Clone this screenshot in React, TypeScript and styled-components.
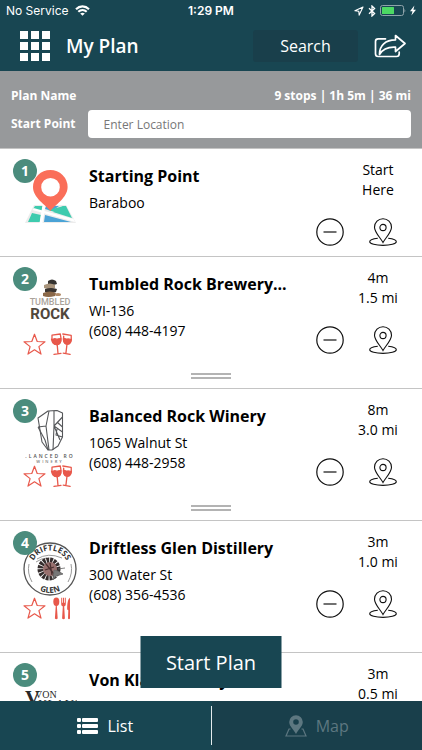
import React from "react";
import styled, { createGlobalStyle } from "styled-components";

const color = {
  teal: "#184652",
  tealDark: "#193f4b",
  green: "#4b8c7d",
  red: "#e8584b",
  grey: "#97999b",
  line: "#c4c4c4",
};

const GlobalStyle = createGlobalStyle`
  *, *::before, *::after { box-sizing: border-box; }
  body { margin: 0; background: #fff; color: #000; font-family: "Open Sans", "Noto Sans", sans-serif; }
  button, input { font: inherit; color: inherit; }
  button { border: 0; padding: 0; background: none; cursor: pointer; }
  svg { display: block; }
`;

const Screen = styled.div`
  display: flex;
  flex-direction: column;
  height: 100vh;
  overflow: hidden;
`;

const StatusBar = styled.div`
  display: grid;
  grid-template-columns: 1fr auto 1fr;
  align-items: center;
  height: 21px;
  padding: 0 6px;
  background: ${color.teal};
  color: #fff;
  font-family: Inter, "Liberation Sans", sans-serif;
  font-size: 12px;
  line-height: 20px;
`;

const StatusGroup = styled.div<{ $end?: boolean }>`
  display: flex;
  align-items: center;
  gap: ${(p) => (p.$end ? 4 : 6)}px;
  justify-content: ${(p) => (p.$end ? "flex-end" : "flex-start")};
`;

const Clock = styled.time`
  font-weight: 600;
`;

const TopBar = styled.header`
  display: flex;
  align-items: center;
  height: 50px;
  padding: 0 16px 0 20px;
  background: ${color.teal};
  color: #fff;
`;

const IconButton = styled.button`
  flex: none;
  display: block;
`;

const PageTitle = styled.h1`
  flex: 1;
  margin: 0 0 0 16px;
  font-size: 19px;
  font-weight: 600;
  line-height: 24px;
`;

const SearchButton = styled.button`
  width: 105px;
  height: 32px;
  margin-right: 16px;
  border-radius: 3px;
  background: ${color.tealDark};
  font-size: 16px;
`;

const PlanPanel = styled.section`
  display: flex;
  flex-direction: column;
  gap: 4px;
  padding: 15px 11px 10px;
  background: ${color.grey};
  color: #fff;
  font-size: 12px;
  font-weight: 700;
  line-height: 20px;
`;

const PlanRow = styled.div`
  display: flex;
  align-items: center;
  justify-content: space-between;
  gap: 12px;
`;

const LocationInput = styled.input`
  flex: 1;
  min-width: 0;
  height: 28px;
  padding: 0 16px;
  border: 0;
  border-radius: 4px;
  background: #fff;
  color: #222;
  font-size: 12px;
  font-weight: 400;
  &::placeholder { color: #777; opacity: 1; }
`;

const ListArea = styled.main`
  position: relative;
  flex: 1;
  min-height: 0;
  display: flex;
  flex-direction: column;
`;

const StopList = styled.ol`
  flex: 1;
  min-height: 0;
  overflow: hidden;
  margin: 0;
  padding: 0;
  list-style: none;
`;

const StopItem = styled.li`
  border-top: 1px solid ${color.line};
`;

const StopBody = styled.div`
  display: grid;
  grid-template-columns: 66px 1fr 106px;
  height: 107px;
  padding-left: 23px;
`;

const Thumb = styled.div`
  position: relative;
  padding-top: 21px;
`;

const LogoFrame = styled.div`
  height: 54px;
`;

const Badge = styled.span`
  position: absolute;
  top: 10px;
  left: -10px;
  width: 24px;
  height: 24px;
  border-radius: 50%;
  background: ${color.green};
  color: #fff;
  font-size: 14px;
  font-weight: 700;
  line-height: 24px;
  text-align: center;
`;

const Tags = styled.div`
  display: flex;
  gap: 4px;
  padding-top: 1px;
`;

const Details = styled.div`
  min-width: 0;
  padding-top: 16px;
  font-size: 14px;
  line-height: 20px;
`;

const StopName = styled.h2`
  margin: 0 0 6px;
  font-size: 16px;
  font-weight: 700;
  line-height: 22px;
  white-space: nowrap;
`;

const Line = styled.div``;

const Aside = styled.div`
  display: flex;
  flex-direction: column;
  align-items: flex-end;
  font-size: 14px;
  line-height: 20px;
`;

const Travel = styled.div`
  width: 88px;
  padding-top: 11px;
  text-align: center;
`;

const Actions = styled.div`
  display: flex;
  gap: 25px;
  padding: 18px 25px 0 0;
`;

const DragHandle = styled.button`
  display: block;
  width: 40px;
  height: 24px;
  margin: 0 auto;
  &::before {
    content: "";
    display: block;
    height: 6px;
    border: solid #b3b3b3;
    border-width: 2px 0;
  }
`;

const StartButton = styled.button`
  position: absolute;
  left: 50%;
  bottom: 13px;
  width: 141px;
  height: 52px;
  transform: translateX(-50%);
  background: ${color.teal};
  color: #fff;
  font-size: 20px;
`;

const TabBar = styled.nav`
  display: flex;
  height: 49px;
  background: ${color.teal};
  color: #fff;
`;

const Tab = styled.button<{ $muted?: boolean }>`
  flex: 1;
  display: flex;
  align-items: center;
  justify-content: center;
  gap: 9px;
  background: ${(p) => (p.$muted ? color.tealDark : color.teal)};
  color: ${(p) => (p.$muted ? "#5d7780" : "#fff")};
  font-size: 16px;
`;

const TabDivider = styled.span`
  width: 1px;
  margin: 5px 0;
  background: #e4ebed;
`;

const WifiIcon = () => (
  <svg width="15" height="11" viewBox="0 0 15 11" fill="none" stroke="#fff" strokeWidth="2.1">
    <path d="M1 4.2C4.7.4 10.3.4 14 4.2M3.3 6.8c2.5-2.4 5.9-2.4 8.4 0" />
    <path d="M7.5 10.8 5.2 8.6q2.3-1.7 4.6 0z" fill="#fff" stroke="none" />
  </svg>
);

const LocationArrow = () => (
  <svg width="10" height="10" viewBox="0 0 10 10" fill="none" stroke="#fff" strokeWidth="1.1">
    <path d="M9 1 .9 4.8l3.9.4.4 3.9z" strokeLinejoin="round" />
  </svg>
);

const BluetoothIcon = () => (
  <svg width="8" height="12" viewBox="0 0 8 12" fill="none" stroke="#fff" strokeWidth="1.3">
    <path d="M1 3.3 6.6 8.5 4 11V1l2.6 2.5L1 8.7" />
  </svg>
);

const BatteryIcon = () => (
  <svg width="26" height="11" viewBox="0 0 26 11">
    <rect x=".5" y=".5" width="23" height="10" rx="2" fill="none" stroke="#8fa3aa" />
    <rect x="2" y="2" width="12" height="7" rx=".5" fill="#4cd964" />
    <path d="M24.5 3.5q1.5 2 0 4z" fill="#8fa3aa" />
  </svg>
);

const BoltIcon = () => (
  <svg width="6" height="11" viewBox="0 0 6 11" fill="#fff">
    <path d="M4.4.5 0 6.2h2.5L1.4 10.5 6 4.7H3.4z" />
  </svg>
);

const GridIcon = () => (
  <svg width="30" height="30" viewBox="0 0 30 30" fill="#fff">
    {[0, 11, 22].map((y) => [0, 11, 22].map((x) => <rect key={`${x}-${y}`} x={x} y={y} width="8" height="8" />))}
  </svg>
);

const ShareIcon = () => (
  <svg width="32" height="24" viewBox="0 0 32 24" fill="none" stroke="#fff" strokeWidth="1.7" strokeLinejoin="round" strokeLinecap="round">
    <path d="M11.5 4.8H4.2Q1.5 4.8 1.5 7.5v12.3Q1.5 22.5 4.2 22.5h18.3q2.7 0 2.7-2.7V18" />
    <path d="M21.5 1.500 31 9.500l-9.500 8v-4.300C14 12.800 9 14.500 5.500 20.500 5.300 11.500 11.500 5.800 21.500 5.800z" />
  </svg>
);

const MinusIcon = () => (
  <svg width="28" height="28" viewBox="0 0 28 28" fill="none" stroke="#111" strokeWidth="1.2">
    <circle cx="14" cy="14" r="13.2" />
    <path d="M7.5 14h13" />
  </svg>
);

const PinIcon = () => (
  <svg width="28" height="28" viewBox="0 0 28 28" fill="none" stroke="#111" strokeWidth="1.1">
    <path d="M14 24.500C11.200 19.500 5.500 14.200 5.500 9.200a8.500 8.500 0 0 1 17 0c0 5-5.700 10.300-8.500 15.300z" />
    <circle cx="14" cy="9.500" r="3.1" />
    <path d="M8.800 20.200C4 20.700.7 22 .7 23.700c0 2.100 6 3.700 13.300 3.700s13.300-1.600 13.300-3.700c0-1.700-3.300-3-8.100-3.500" />
  </svg>
);

const StarIcon = () => (
  <svg width="23" height="23" viewBox="0 0 23 23" fill="none" stroke={color.red} strokeWidth="1.2" strokeLinejoin="round">
    <path d="m11.500 1.200 2.700 7.300 7.800.3-6.100 4.800 2.100 7.500-6.500-4.300L5 21.100l2.100-7.500L1 8.800l7.800-.3z" />
  </svg>
);

const GlassesIcon = () => (
  <svg width="23" height="23" viewBox="0 0 23 23" fill="none" stroke={color.red} strokeWidth="1.3" strokeLinecap="round" strokeLinejoin="round">
    <path d="M2 2.200 10.300 1c1.300 5.600.8 10.100-2.800 10.600S1.200 8.300 2 2.200zM7.200 11.600l.8 9M4 21.400l7-1" />
    <path d="M1.500 6.200c1.500.8 2.400-1 4-.3s3.400-.4 5.400-.3c.2 3-.8 5.400-3.400 5.900S2.300 10.200 1.500 6.200z" fill={color.red} />
    <path d="m12.800 1 8.400 1.300c.6 5.600-.9 9.200-4.200 8.800s-3.900-4-3.300-8M17 11.100l-1.100 9.200M13.200 20.200l6.900 1.100" />
    <path d="M13.400 5.700c1.500-.8 2.400.8 4 .3s2.400 1 4 .4c-.4 3.200-2 5.100-4.400 4.700s-3.600-2.300-3.600-5.400z" fill={color.red} />
  </svg>
);

const UtensilsIcon = () => (
  <svg width="23" height="23" viewBox="0 0 23 23" fill={color.red}>
    <ellipse cx="6.3" cy="4.8" rx="3" ry="4.2" />
    <path d="M5.800 8h1l.9 13.500q-1.400 1.400-2.800 0zM11.200.8h1v5h.8v-5h1v5h.8v-5h1v6c0 1.800-.8 2.300-1.600 2.700l.7 12q-1.400 1.400-2.800 0l.7-12c-.8-.4-1.600-.9-1.600-2.700zM20 .8v20.700q-1 1.300-2 0l.3-8.200-1.100-.8C17.200 6.800 17.800 2.200 20 .8z" />
  </svg>
);

const ListIcon = () => (
  <svg width="21" height="16" viewBox="0 0 21 16" fill="#fff">
    {[0, 6, 12].map((y) => (
      <g key={y}>
        <rect y={y} width="4" height="4" rx="1" />
        <rect x="5" y={y} width="16" height="4" rx="1" />
      </g>
    ))}
  </svg>
);

const MapIcon = () => (
  <svg width="22" height="22" viewBox="0 0 22 22" fill="none" stroke="#5d7780" strokeWidth="1.2">
    <path d="M5.500 14H4L1 21h20l-3-7h-1.500" />
    <path fillRule="evenodd" fill="#5d7780" stroke="none" d="M11 19C9 14.700 4.200 11.400 4.200 7a6.800 6.800 0 0 1 13.600 0c0 4.400-4.800 7.700-6.800 12zm0-9.200a2.800 2.800 0 1 0 0-5.600 2.800 2.800 0 0 0 0 5.600z" />
  </svg>
);

const MapLogo = () => (
  <svg width="54" height="54" viewBox="0 0 54 54">
    <path d="M11 35h32l10 18H2z" fill="#ececec" />
    <path d="M12 36h8l-1 5-9-2zM9 43l9 2-1 7H5zM40 36h3l6 12-19-6z" fill="#3ecbae" />
    <path d="M23 36h13l-7 5-7-2zM22 45l26 7H21z" fill="#4aa3d6" />
    <path d="m25 40 16-4 5 10z" fill="#3ecbae" />
    <path d="M19.500 35h3l-3 18h-3zM9.500 40l1-2 40 11 1.500 3z" fill="#fff" />
    <path fillRule="evenodd" fill="#fa6e59" d="M27.500 41C23 35 10 28 10 17a17.300 17 0 0 1 34.600 0c0 11-13 18-17.100 24zm0-14.500a9.300 9.300 0 1 0 0-18.600 9.300 9.300 0 0 0 0 18.600z" />
  </svg>
);

const TumbledLogo = () => (
  <svg width="54" height="54" viewBox="0 0 54 54" fontFamily="Roboto, sans-serif" textAnchor="middle">
    <path d="M25 3q4-3 8 0l1 3q-5 2-9 0z" fill="#353331" />
    <path d="M21 7q6-3 11 0v3q-6 2-11 0z" fill="#a8947c" />
    <path d="M22 11q6-2 12 0l-1 3q-5 2-11 0z" fill="#393431" />
    <path d="M20 15q7-3 13 0l-1 3q-7 2-12 0z" fill="#8a6849" />
    <ellipse cx="35" cy="16.5" rx="3" ry="1.6" fill="#b18b68" />
    <text x="27" y="27" fontSize="9" fontWeight="500" fill="#aaa39b">TUMBLED</text>
    <text x="27" y="41" fontSize="15" fontWeight="700" fill="#51473b">ROCK</text>
  </svg>
);

const BalancedLogo = () => (
  <svg width="54" height="54" viewBox="0 0 54 54" fontFamily="Open Sans, sans-serif" textAnchor="middle">
    <g fill="none" stroke="#55575a" strokeWidth="1.1" strokeLinejoin="round">
      <path d="M15 8 25 1l9-.5L39.500 3v24L35 36l-6 4h-4l-6-8z" />
      <path d="m15 17 8-1 3-15M23 16l3 24M31 1v15l-1 24M31 16l8.500-9M31 16l8.500 6M31 16l6 14M15 17l7 13 3 10M34 12l5.500 5M34 19l-1 6 6.500 2" />
    </g>
    <text x="27" y="48" fontSize="5" fontWeight="600" fill="#555" letterSpacing="2">.LANCED RO</text>
    <text x="27" y="53" fontSize="4" fontWeight="600" fill="#777" letterSpacing="2">WINERY</text>
  </svg>
);

const DriftlessLogo = () => (
  <svg width="54" height="54" viewBox="0 0 54 54" fontFamily="Open Sans, sans-serif" fontWeight="700" textAnchor="middle">
    <defs>
      <path id="arc-top" d="M8.500 27a18.500 18.500 0 0 1 37 0" />
      <path id="arc-bottom" d="M3 27a24 24 0 0 0 48 0" />
    </defs>
    <circle cx="27" cy="27" r="26" fill="#fff" stroke="#555" strokeWidth="1.3" />
    <path d="M6 22q-2 9 3 18M48 22q2 9-3 18M14 17q11-7 25-1M13 20q6-4 11-4" fill="none" stroke="#999" />
    <circle cx="26" cy="27" r="8.5" fill="none" stroke="#352d2d" strokeWidth="6" strokeDasharray="2.6 .8" />
    <circle cx="27" cy="27" r="7" fill="#98706e" />
    <path d="m23 22 8 10M22 28l9-3M27 21l2 12" stroke="#4a3030" strokeWidth="1.3" />
    <path d="m31 28 4 1 5 3-7 2-3 4zM35 27l7-1" fill="#777" stroke="#666" strokeWidth=".8" />
    <text fontSize="8" fill="#333"><textPath href="#arc-top" startOffset="50%">DRIFTLESS</textPath></text>
    <text fontSize="8" fill="#333"><textPath href="#arc-bottom" startOffset="50%">GLEN</textPath></text>
  </svg>
);

const VonKlausLogo = () => (
  <svg width="54" height="54" viewBox="0 0 54 54" fontFamily="Liberation Serif, serif" fill="#292929">
    <text x="2" y="31" fontSize="21" fontWeight="700">V</text>
    <text x="12" y="24" fontSize="10">VON</text>
    <text x="15" y="34" fontSize="13">KLAUS</text>
  </svg>
);

type Stop = {
  name: string;
  lines: string[];
  travel: [string, string];
  logo: React.ReactNode;
  tag?: React.ReactNode;
};

const stops: Stop[] = [
  { name: "Starting Point", lines: ["Baraboo"], travel: ["Start", "Here"], logo: <MapLogo /> },
  { name: "Tumbled Rock Brewery...", lines: ["WI-136", "(608) 448-4197"], travel: ["4m", "1.5 mi"], logo: <TumbledLogo />, tag: <GlassesIcon /> },
  { name: "Balanced Rock Winery", lines: ["1065 Walnut St", "(608) 448-2958"], travel: ["8m", "3.0 mi"], logo: <BalancedLogo />, tag: <GlassesIcon /> },
  { name: "Driftless Glen Distillery", lines: ["300 Water St", "(608) 356-4536"], travel: ["3m", "1.0 mi"], logo: <DriftlessLogo />, tag: <UtensilsIcon /> },
  { name: "Von Klaus Winery", lines: [], travel: ["3m", "0.5 mi"], logo: <VonKlausLogo />, tag: <GlassesIcon /> },
];

export default function App() {
  return (
    <>
      <GlobalStyle />
      <Screen>
        <StatusBar>
          <StatusGroup>No Service <WifiIcon /></StatusGroup>
          <Clock>1:29 PM</Clock>
          <StatusGroup $end>
            <LocationArrow />
            <BluetoothIcon />
            <BatteryIcon />
            <BoltIcon />
          </StatusGroup>
        </StatusBar>
        <TopBar>
          <IconButton aria-label="Menu"><GridIcon /></IconButton>
          <PageTitle>My Plan</PageTitle>
          <SearchButton>Search</SearchButton>
          <IconButton aria-label="Share"><ShareIcon /></IconButton>
        </TopBar>
        <PlanPanel>
          <PlanRow>
            <span>Plan Name</span>
            <span>9 stops | 1h 5m | 36 mi</span>
          </PlanRow>
          <PlanRow>
            <label htmlFor="start-point">Start Point</label>
            <LocationInput id="start-point" type="text" placeholder="Enter Location" />
          </PlanRow>
        </PlanPanel>
        <ListArea>
          <StopList>
            {stops.map((stop, i) => (
              <StopItem key={stop.name}>
                <StopBody>
                  <Thumb>
                    <LogoFrame>{stop.logo}</LogoFrame>
                    <Badge>{i + 1}</Badge>
                    {stop.tag && (
                      <Tags>
                        <IconButton aria-label={`Favorite ${stop.name}`}><StarIcon /></IconButton>
                        {stop.tag}
                      </Tags>
                    )}
                  </Thumb>
                  <Details>
                    <StopName>{stop.name}</StopName>
                    {stop.lines.map((line) => <Line key={line}>{line}</Line>)}
                  </Details>
                  <Aside>
                    <Travel>
                      <Line>{stop.travel[0]}</Line>
                      <Line>{stop.travel[1]}</Line>
                    </Travel>
                    <Actions>
                      <IconButton aria-label={`Remove ${stop.name}`}><MinusIcon /></IconButton>
                      <IconButton aria-label={`Show ${stop.name} on map`}><PinIcon /></IconButton>
                    </Actions>
                  </Aside>
                </StopBody>
                {i > 0 && <DragHandle aria-label={`Reorder ${stop.name}`} />}
              </StopItem>
            ))}
          </StopList>
          <StartButton>Start Plan</StartButton>
        </ListArea>
        <TabBar>
          <Tab aria-current="page"><ListIcon />List</Tab>
          <TabDivider />
          <Tab $muted><MapIcon />Map</Tab>
        </TabBar>
      </Screen>
    </>
  );
}
